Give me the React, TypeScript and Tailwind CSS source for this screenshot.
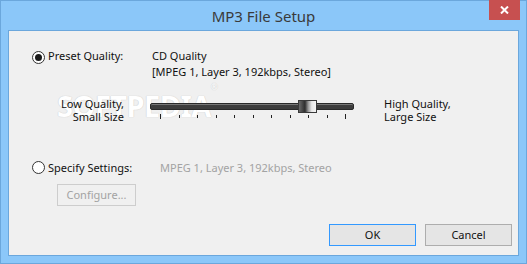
const font = { fontFamily: '"Noto Sans", "Open Sans", sans-serif' }

function Radio({ checked }: { checked?: boolean }) {
  return (
    <div className="w-[13px] h-[13px] rounded-full border border-[#333333] bg-white flex items-center justify-center shrink-0">
      {checked && <div className="w-[7px] h-[7px] rounded-full bg-[#1a1a1a]" />}
    </div>
  )
}

function Slider() {
  const ticks = [0, 1, 2, 3, 4, 5, 6, 7, 8, 9, 10]
  return (
    <div className="relative w-[204px] h-[26px] shrink-0">
      {/* track */}
      <div className="absolute left-0 right-0 top-[6px] h-[7px] rounded-[2px] bg-[#3d3d3d] border border-[#2a2a2a] shadow-[inset_0_1px_0_#777]" />
      {/* thumb */}
      <div className="absolute left-[148px] top-[3px] w-[19px] h-[13px] border border-[#3a3a3a] bg-[linear-gradient(to_right,#6a6a6a,#2e2e2e_35%,#9a9a9a_55%,#e8e8e8_75%,#f4f4f4)]" />
      {/* ticks */}
      <div className="absolute left-[10px] right-[8px] top-[17px] flex justify-between">
        {ticks.map((t) => (
          <div
            key={t}
            className={t === 0 || t === 10 ? "w-px h-[5px] bg-[#222]" : "w-px h-[3px] mt-[1px] bg-[#222]"}
          />
        ))}
      </div>
    </div>
  )
}

export default function App() {
  return (
    <div className="w-[527px] h-[264px] bg-[#8bc7f9] flex flex-col border border-[#6ba7dc] select-none" style={font}>
      {/* Title bar */}
      <div className="relative h-[29px] shrink-0 flex items-center justify-center">
        <span className="text-[15px] text-[#3a3a3a] mt-[1px]">MP3 File Setup</span>
        <div className="absolute right-[6px] top-[-1px] w-[31px] h-[20px] bg-[#c75050] flex items-center justify-center">
          <svg width="9" height="8" viewBox="0 0 9 8">
            <path d="M1 0.5 L8 7.5 M8 0.5 L1 7.5" stroke="white" strokeWidth="2" />
          </svg>
        </div>
      </div>

      {/* Client area */}
      <div className="relative flex-1 mx-[7px] mb-[7px] bg-[#f0f0f0] border border-[#6ba7dc] flex flex-col pl-[23px] pr-[6px] text-[11px] text-[#111]">
        {/* watermark */}
        <div className="absolute left-[48px] top-[60px] text-[29px] font-bold tracking-[-0.5px] text-white leading-none pointer-events-none [text-shadow:0_0_1px_#cfcfcf,0_0_1px_#cfcfcf]">
          SOFTPEDIA<sup className="text-[8px] align-top">®</sup>
        </div>

        {/* Preset quality */}
        <div className="flex items-start mt-[17px] relative">
          <div className="mt-[3px]">
            <Radio checked />
          </div>
          <span className="ml-[3px] w-[104px] leading-[16px]">Preset Quality:</span>
          <div className="flex flex-col leading-[16px]">
            <span>CD Quality</span>
            <span>[MPEG 1, Layer 3, 192kbps, Stereo]</span>
          </div>
        </div>

        {/* Slider row */}
        <div className="flex items-start mt-[17px] relative">
          <div className="w-[92px] text-right leading-[13px] flex flex-col">
            <span>Low Quality,</span>
            <span>Small Size</span>
          </div>
          <div className="ml-[26px]">
            <Slider />
          </div>
          <div className="ml-[30px] leading-[13px] flex flex-col">
            <span>High Quality,</span>
            <span>Large Size</span>
          </div>
        </div>

        {/* Specify settings */}
        <div className="flex items-start mt-[37px]">
          <div className="mt-[1px]">
            <Radio />
          </div>
          <span className="ml-[3px] w-[112px] leading-[16px]">Specify Settings:</span>
          <span className="leading-[16px] text-[#a3a3a3]">MPEG 1, Layer 3, 192kbps, Stereo</span>
        </div>

        <div className="flex mt-[8px] ml-[25px]">
          <div className="w-[79px] h-[22px] border border-[#cdcdcd] bg-[#f0f0f0] flex items-center justify-center text-[#a3a3a3]">
            Configure...
          </div>
        </div>

        {/* Buttons */}
        <div className="flex justify-end gap-[9px] mt-[18px]">
          <div className="w-[87px] h-[22px] border border-[#3399ff] bg-[#e5e5e5] flex items-center justify-center">
            OK
          </div>
          <div className="w-[87px] h-[22px] border border-[#adadad] bg-[#e5e5e5] flex items-center justify-center">
            Cancel
          </div>
        </div>
      </div>
    </div>
  )
}
